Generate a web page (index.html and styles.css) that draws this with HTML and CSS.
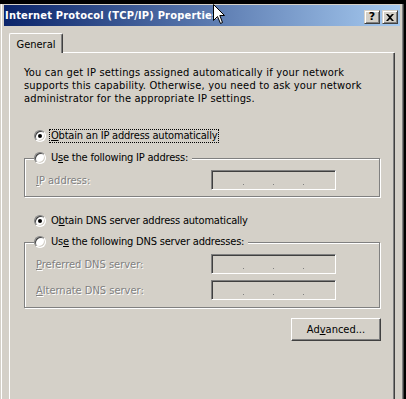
FILE: index.html
```html
<!DOCTYPE html>
<html lang="en">
<head>
  <meta charset="UTF-8">
  <title>Internet Protocol (TCP/IP) Properties</title>
  <link rel="stylesheet" href="styles.css">
</head>
<body>
  <div class="window">
    <div class="titlebar">
      <span class="title">Internet Protocol (TCP/IP) Properties</span>
      <div class="caption-buttons">
        <button class="cap-btn help">?</button>
        <button class="cap-btn close">
          <svg width="8" height="7" viewBox="0 0 8 7"><path d="M0 0h2l2 2 2-2h2L5 3.5 8 7H6L4 5 2 7H0l3-3.5z" fill="#000"/></svg>
        </button>
      </div>
    </div>

    <div class="client">
      <div class="tabs">
        <div class="tab active">General</div>
        <div class="tab-fill"></div>
      </div>

      <div class="sheet">
        <p class="intro">You can get IP settings assigned automatically if your network<br>supports this capability. Otherwise, you need to ask your network<br>administrator for the appropriate IP settings.</p>

        <label class="radio-row first">
          <span class="radio checked"></span>
          <span class="radio-text focused"><u>O</u>btain an IP address automatically</span>
        </label>

        <fieldset class="group ip-group">
          <legend>
            <label class="radio-row">
              <span class="radio"></span>
              <span class="radio-text">U<u>s</u>e the following IP address:</span>
            </label>
          </legend>
          <div class="field-row">
            <span class="field-label"><u>I</u>P address:</span>
            <span class="ip-box"><i></i><i></i><i></i></span>
          </div>
        </fieldset>

        <label class="radio-row dns-auto">
          <span class="radio checked"></span>
          <span class="radio-text">O<u>b</u>tain DNS server address automatically</span>
        </label>

        <fieldset class="group dns-group">
          <legend>
            <label class="radio-row">
              <span class="radio"></span>
              <span class="radio-text">Us<u>e</u> the following DNS server addresses:</span>
            </label>
          </legend>
          <div class="field-row">
            <span class="field-label"><u>P</u>referred DNS server:</span>
            <span class="ip-box"><i></i><i></i><i></i></span>
          </div>
          <div class="field-row">
            <span class="field-label"><u>A</u>lternate DNS server:</span>
            <span class="ip-box"><i></i><i></i><i></i></span>
          </div>
        </fieldset>

        <div class="actions">
          <button class="btn">Ad<u>v</u>anced...</button>
        </div>
      </div>
    </div>
  </div>

  <!-- mouse pointer sitting on the title bar -->
  <svg class="cursor" width="13" height="21" viewBox="0 0 13 21">
    <path d="M0.5 0.5V16.5L4.5 12.5L7.5 19.5L9.5 18.5L6.8 11.5H11.5Z" fill="#fff" stroke="#000" stroke-width="1" stroke-linejoin="miter"/>
  </svg>
</body>
</html>
```

FILE: styles.css
```css
:root {
  --face: #D4D0C8;
  --shadow: #808080;
  --dark: #404040;
  --light: #FFFFFF;
}

html, body {
  margin: 0;
  height: 399px;
  overflow: hidden;
}

body {
  background: #000;
  font-family: "DejaVu Sans Condensed", "DejaVu Sans", sans-serif;
  font-stretch: condensed;
  font-size: 11px;
  color: #000;
  position: relative;
}

.window {
  margin-top: 4px;
  width: 404px;
  height: 430px;
  box-sizing: border-box;
  background: var(--face);
  padding: 1px 4px 0 4px;
  box-shadow: inset 1px 0 var(--face), inset 2px 0 var(--light), inset -1px 0 var(--dark), inset -2px 0 var(--shadow);
}

.titlebar {
  height: 21px;
  display: flex;
  align-items: flex-end;
  justify-content: space-between;
  padding: 0 2px 2px 1px;
  box-sizing: border-box;
  background: linear-gradient(to right, #0A246A, #A6CAF0);
}

.title {
  color: #fff;
  font-weight: bold;
  font-size: 11px;
  letter-spacing: 0.2px;
  line-height: 16px;
  white-space: nowrap;
}

.caption-buttons {
  display: flex;
  gap: 2px;
}

.cap-btn {
  width: 16px;
  height: 14px;
  padding: 0;
  margin: 0;
  display: flex;
  align-items: center;
  justify-content: center;
  background: var(--face);
  border: 1px solid;
  border-color: var(--face) var(--dark) var(--dark) var(--face);
  box-shadow: inset 1px 1px var(--light), inset -1px -1px var(--shadow);
  font-family: "DejaVu Sans", sans-serif;
  font-weight: bold;
  font-size: 11px;
  line-height: 12px;
  color: #000;
}

.client {
  padding: 7px 5px 0 5px;
}

.tabs {
  display: flex;
  align-items: flex-end;
}

.tab {
  width: 54px;
  height: 20px;
  box-sizing: border-box;
  display: flex;
  align-items: center;
  justify-content: center;
  padding-top: 1px;
  border-top: 1px solid var(--light);
  border-left: 1px solid var(--light);
  border-right: 1px solid var(--dark);
  border-radius: 2px 2px 0 0;
  box-shadow: inset -1px 0 var(--shadow);
}

.tab-fill {
  flex: 1;
  margin-right: 1px;
  border-bottom: 1px solid var(--light);
}

.sheet {
  height: 380px;
  padding: 13px 13px 0 14px;
  border-left: 1px solid var(--light);
  border-right: 1px solid var(--dark);
  box-shadow: inset -1px 0 var(--shadow);
}

.intro {
  margin: 0;
  line-height: 13px;
  letter-spacing: 0.2px;
}

.radio-row {
  display: flex;
  align-items: center;
  height: 14px;
}

.radio-row.first {
  margin: 24px 0 0 10px;
}

.radio {
  width: 12px;
  height: 12px;
  box-sizing: border-box;
  border-radius: 50%;
  background: var(--light);
  border: 1px solid;
  border-color: var(--shadow) var(--light) var(--light) var(--shadow);
  box-shadow: inset 1px 1px var(--dark), inset -1px -1px var(--face);
  display: flex;
  align-items: center;
  justify-content: center;
  flex: none;
}

.radio.checked::after {
  content: "";
  width: 4px;
  height: 4px;
  border-radius: 50%;
  background: #000;
}

.radio-text {
  margin-left: 3px;
  padding: 0 1px;
  border: 1px dotted transparent;
  line-height: 12px;
  letter-spacing: -0.2px;
  white-space: nowrap;
}

.radio-text.focused {
  border-color: #000;
}

.group {
  margin: 8px 1px 0 0;
  padding: 5px 0 6px 9px;
  border: 1px solid var(--shadow);
  box-shadow: 1px 1px var(--light), inset 1px 1px var(--light);
  min-width: 0;
}

.group legend {
  padding: 0 2px 0 0;
  background: var(--face);
}

.dns-auto {
  margin: 17px 0 0 10px;
}

.dns-group {
  margin-top: 7px;
  padding-bottom: 7px;
}

.field-row {
  display: flex;
  align-items: center;
  padding-left: 2px;
}

.field-row + .field-row {
  margin-top: 6px;
}

.field-label {
  width: 175px;
  color: var(--shadow);
  text-shadow: 1px 1px var(--light);
  white-space: nowrap;
}

.ip-box {
  width: 125px;
  height: 20px;
  box-sizing: border-box;
  display: flex;
  align-items: flex-end;
  gap: 29px;
  padding: 0 0 4px 31px;
  border: 1px solid;
  border-color: var(--shadow) var(--light) var(--light) var(--shadow);
  box-shadow: inset 1px 1px var(--dark), inset -1px -1px var(--face);
}

.ip-box i {
  width: 1px;
  height: 1px;
  background: var(--shadow);
}

.actions {
  display: flex;
  justify-content: flex-end;
  margin-top: 10px;
}

.btn {
  width: 90px;
  height: 23px;
  padding: 0;
  background: var(--face);
  border: 1px solid;
  border-color: var(--light) var(--dark) var(--dark) var(--light);
  box-shadow: inset -1px -1px var(--shadow), inset 1px 1px var(--face);
  font: inherit;
  color: #000;
}

.cursor {
  position: absolute;
  left: 213px;
  top: 4px;
}
```
